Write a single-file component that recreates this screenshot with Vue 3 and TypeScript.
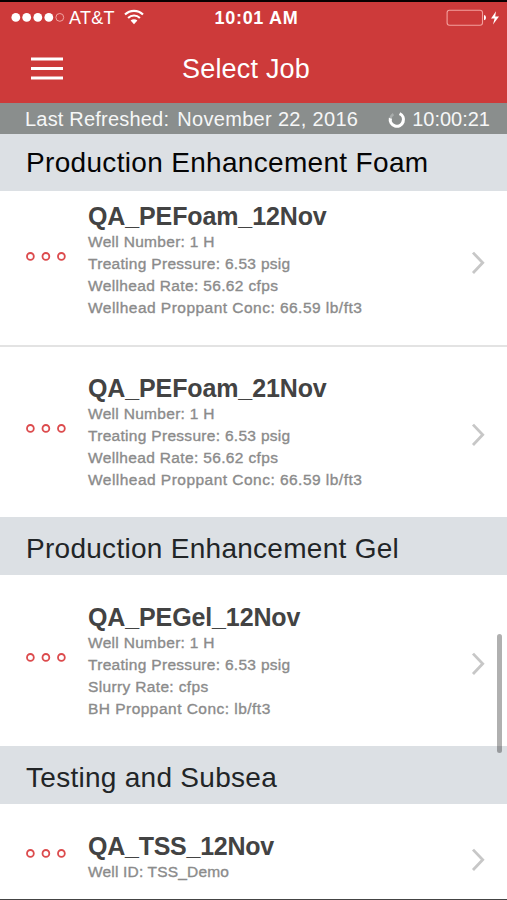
<script setup lang="ts">
interface Job {
  name: string
  details: string[]
  state?: 'tucked' | 'divided' | 'short'
}

interface Section {
  title: string
  pinned?: boolean
  jobs: Job[]
}

const wellDetails: string[] = [
  'Well Number: 1 H',
  'Treating Pressure: 6.53 psig',
  'Wellhead Rate: 56.62 cfps',
  'Wellhead Proppant Conc: 66.59 lb/ft3',
]

const sections: Section[] = [
  {
    title: 'Production Enhancement Foam',
    pinned: true,
    jobs: [
      { name: 'QA_PEFoam_12Nov', details: wellDetails, state: 'tucked' },
      { name: 'QA_PEFoam_21Nov', details: wellDetails, state: 'divided' },
    ],
  },
  {
    title: 'Production Enhancement Gel',
    jobs: [
      {
        name: 'QA_PEGel_12Nov',
        details: [
          'Well Number: 1 H',
          'Treating Pressure: 6.53 psig',
          'Slurry Rate: cfps',
          'BH Proppant Conc: lb/ft3',
        ],
      },
    ],
  },
  {
    title: 'Testing and Subsea',
    jobs: [{ name: 'QA_TSS_12Nov', details: ['Well ID: TSS_Demo'], state: 'short' }],
  },
]
</script>

<template>
  <div class="screen">
    <header class="top">
      <div class="status">
        <div class="carrier">
          <svg class="signal" width="54" height="12" viewBox="0 0 54 12">
            <circle cx="4.8" cy="5.4" r="4.4" fill="#fff" />
            <circle cx="15.7" cy="5.4" r="4.4" fill="#fff" />
            <circle cx="26.8" cy="5.4" r="4.4" fill="#fff" />
            <circle cx="37.8" cy="5.4" r="4.4" fill="#fff" />
            <circle cx="48.8" cy="5.4" r="3.9" fill="none" stroke="#f0a5a3" stroke-width="1" />
          </svg>
          <span class="network">AT&amp;T</span>
          <svg class="wifi" width="20" height="16" viewBox="0 0 20 16">
            <g fill="none" stroke="#fff" stroke-width="2.1">
              <path d="M1 5.6a12.8 12.8 0 0 1 18 0" />
              <path d="M4.1 8.9a8.4 8.4 0 0 1 11.8 0" />
            </g>
            <path d="M6.6 11.6a4.9 4.9 0 0 1 6.8 0L10 15.2z" fill="#fff" />
          </svg>
        </div>
        <span class="clock">10:01 AM</span>
        <svg class="battery" width="54" height="18" viewBox="0 0 54 18">
          <rect x="1.1" y="1.2" width="35.4" height="15" rx="2.4" fill="none" stroke="#f3a09d" stroke-width="1.1" />
          <path d="M38 6.1q2 .4 2 2.6t-2 2.6z" fill="#fff" />
          <path d="M50 2.2L45 9.4h3.6l-1.6 6 6-7.8h-3.8z" fill="#fff" />
        </svg>
      </div>
      <div class="nav">
        <svg class="menu" width="32" height="24" viewBox="0 0 32 24">
          <path d="M0 2h32M0 11.5h32M0 21h32" stroke="#fff" stroke-width="3.1" />
        </svg>
        <h1 class="heading">Select Job</h1>
      </div>
    </header>

    <div class="refresh">
      <span class="refresh-label">Last Refreshed:</span>
      <span class="refresh-date">November 22, 2016</span>
      <svg class="spinner" width="18" height="18" viewBox="0 0 18 18">
        <path d="M2.4 7.2A6.6 6.6 0 1 0 11.6 2.6" fill="none" stroke="#fff" stroke-width="3.2" />
        <path d="M2.4 7.2A6.6 6.6 0 0 1 5.4 3.1" fill="none" stroke="#a9adac" stroke-width="2.4" />
      </svg>
      <span class="refresh-time">10:00:21</span>
    </div>

    <main class="list">
      <section v-for="section in sections" :key="section.title">
        <h2 class="section-title" :class="{ pinned: section.pinned }"><span>{{ section.title }}</span></h2>
        <article v-for="job in section.jobs" :key="job.name" class="job" :class="job.state">
          <svg class="dots" width="42" height="10" viewBox="0 0 42 10">
            <g fill="none" stroke="#dc4b4d" stroke-width="1.8">
              <circle cx="5.4" cy="5.4" r="3.4" />
              <circle cx="20.9" cy="5.4" r="3.4" />
              <circle cx="36.4" cy="5.4" r="3.4" />
            </g>
          </svg>
          <div class="info">
            <h3 class="name">{{ job.name }}</h3>
            <p v-for="line in job.details" :key="line" class="detail">{{ line }}</p>
          </div>
          <svg class="chevron" width="14" height="24" viewBox="0 0 14 24">
            <path d="M2 1.6l9.7 10.2L2 22" fill="none" stroke="#c7c7c7" stroke-width="2.8" />
          </svg>
        </article>
      </section>
      <div class="scrollbar"></div>
    </main>
  </div>
</template>

<style>
body {
  margin: 0;
}
</style>

<style scoped>
.screen {
  display: flex;
  flex-direction: column;
  box-sizing: border-box;
  width: 507px;
  height: 900px;
  overflow: hidden;
  border-top: 2px solid #090000;
  border-bottom: 1px solid #444;
  background: #fff;
  font-family: "Liberation Sans", Arial, sans-serif;
  white-space: nowrap;
}

h1,
h2,
h3,
p {
  margin: 0;
  font-weight: 400;
}

svg {
  display: block;
  flex: none;
}

.top {
  flex: none;
  height: 101px;
  background: #cd3a3a;
  color: #fff;
}

.status {
  display: grid;
  grid-template-columns: 1fr auto 1fr;
  align-items: center;
  height: 32px;
  padding: 0 7px 0 11px;
}

.carrier {
  display: flex;
  align-items: center;
}

.network {
  margin-left: 4px;
  font-size: 18px;
  line-height: 32px;
  letter-spacing: 0.3px;
}

.wifi {
  margin-left: 9px;
  margin-top: -2px;
}

.clock {
  margin-left: 2px;
  font-size: 18px;
  font-weight: 700;
  letter-spacing: 0.7px;
  line-height: 32px;
}

.battery {
  justify-self: end;
}

.nav {
  display: grid;
  grid-template-columns: 32px 1fr 32px;
  align-items: center;
  height: 69px;
  padding: 0 46px 0 31px;
}

.heading {
  text-align: center;
  font-size: 27px;
  letter-spacing: 0.2px;
  line-height: 32px;
}

.refresh {
  display: flex;
  flex: none;
  align-items: center;
  box-sizing: border-box;
  height: 31px;
  padding: 2px 17px 0 25px;
  background: #8a8e8d;
  color: #f6f7f7;
  font-size: 20px;
  line-height: 29px;
}

.refresh-label {
  letter-spacing: 0.2px;
}

.refresh-date {
  margin-left: 8px;
  letter-spacing: 0.32px;
}

.spinner {
  margin-left: auto;
}

.refresh-time {
  margin-left: 6px;
}

.list {
  position: relative;
  flex: 1;
  min-height: 0;
}

.section-title {
  height: 58px;
  padding-left: 26px;
  background: #dce0e4;
  color: #222527;
  font-size: 28px;
  letter-spacing: 0.28px;
  line-height: 63px;
}

.section-title.pinned {
  height: 57px;
  color: #050505;
  letter-spacing: 0.32px;
  line-height: 57px;
}

.job {
  display: flex;
  align-items: flex-start;
  box-sizing: border-box;
  height: 171px;
  padding: 27px 22px 0 25px;
}

.job.tucked {
  height: 154px;
  padding-top: 10px;
}

.job.divided {
  height: 172px;
  padding-top: 26px;
  border-top: 2px solid #e3e3e3;
}

.dots {
  margin-top: 50px;
}

.info {
  flex: 1;
  margin-left: 21px;
}

.name {
  color: #434343;
  font-size: 25px;
  font-weight: 700;
  letter-spacing: -0.12px;
  line-height: 30px;
}

.detail {
  color: #8b8b8b;
  font-size: 15.5px;
  letter-spacing: 0.3px;
  line-height: 22px;
  -webkit-text-stroke: 0.35px #8b8b8b;
}

.detail:nth-child(4) {
  letter-spacing: 0.35px;
}

.detail:nth-child(5) {
  letter-spacing: 0.47px;
}

.chevron {
  margin-top: 50px;
}

.short .dots,
.short .chevron {
  margin-top: 17px;
}

.short .name {
  letter-spacing: -0.25px;
}

.short .detail {
  letter-spacing: 0.18px;
}

.scrollbar {
  position: absolute;
  top: 500px;
  right: 5px;
  width: 5px;
  height: 119px;
  border-radius: 3px;
  background: rgba(0, 0, 0, 0.31);
}
</style>
